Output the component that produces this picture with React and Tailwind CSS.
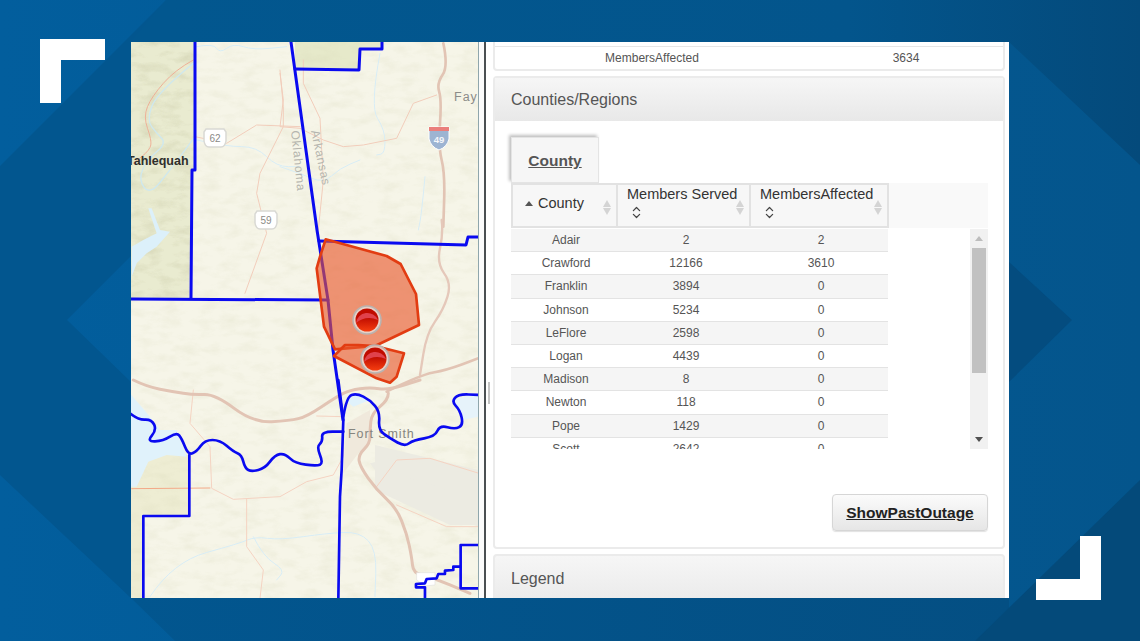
import React from 'react';
import { ChevronsUpDown } from 'lucide-react';

const rows = [
    ['Adair', '2', '2'],
    ['Crawford', '12166', '3610'],
    ['Franklin', '3894', '0'],
    ['Johnson', '5234', '0'],
    ['LeFlore', '2598', '0'],
    ['Logan', '4439', '0'],
    ['Madison', '8', '0'],
    ['Newton', '118', '0'],
    ['Pope', '1429', '0'],
    ['Scott', '2642', '0'],
];

// paths are traced in the coordinates of a 3x crop, so each group scales back down
const Crop = ({ x, y, children }) => <g transform={`translate(${x} ${y}) scale(0.3333)`}>{children}</g>;

const Line = ({ d, color = '#0a0af0', w = 9 }) => (
    <polyline points={d} fill="none" stroke={color} strokeWidth={w} strokeLinejoin="round" strokeLinecap="round" />
);

// same trace, but rounded through the midpoints of its segments
const Curve = ({ d, color = '#0a0af0', w = 8 }) => {
    const pts = d.split(' ').map(p => p.split(',').map(Number));
    let path = `M${pts[0][0]} ${pts[0][1]}`;
    for (let i = 1; i < pts.length - 1; i++) {
        const mx = (pts[i][0] + pts[i + 1][0]) / 2;
        const my = (pts[i][1] + pts[i + 1][1]) / 2;
        path += ` Q${pts[i][0]} ${pts[i][1]} ${mx} ${my}`;
    }
    const last = pts[pts.length - 1];
    path += ` L${last[0]} ${last[1]}`;
    return <path d={path} fill="none" stroke={color} strokeWidth={w} strokeLinecap="round" strokeLinejoin="round" />;
};

const Marker = ({ cx, cy }) => (
    <g>
        <circle cx={cx} cy={cy} r="14" fill="#e8e4e2" fillOpacity="0.75" stroke="#b9b3b0" strokeWidth="1.5" />
        <circle cx={cx} cy={cy} r="11.5" fill="url(#markerRed)" />
        <path d={`M${cx - 11} ${cy + 3} Q${cx - 1} ${cy - 5} ${cx + 11} ${cy} A11.5 11.5 0 0 0 ${cx - 11} ${cy + 3} Z`} fill="#e0424c" />
    </g>
);

const Shield = ({ x, y, label }) => (
    <g>
        <path d={`M${x - 9} ${y - 9} h18 l2 3 v9 q-1 6 -5 6 h-12 q-4 0 -5 -6 v-9 z`} fill="#fff" stroke="#d9d9d4" strokeWidth="1.5" />
        <text x={x} y={y + 4} textAnchor="middle" fontSize="10" fill="#8a8a86">{label}</text>
    </g>
);

const MapPane = () => (
    <div className="w-[347px] h-full shrink-0 bg-[#f5f4e7] font-['Liberation_Sans',sans-serif]">
        <svg viewBox="131 42 347 556" className="w-full h-full block">
            <defs>
                <filter id="hills" x="0" y="0" width="100%" height="100%">
                    <feTurbulence type="fractalNoise" baseFrequency="0.05 0.11" numOctaves="4" seed="8" />
                    <feColorMatrix values="0 0 0 0 0.66  0 0 0 0 0.66  0 0 0 0 0.46  1.6 0 0 0 -0.68" />
                </filter>
                <linearGradient id="markerRed" x1="0" y1="0" x2="0" y2="1">
                    <stop offset="0.4" stopColor="#c00c00" />
                    <stop offset="1" stopColor="#f63e10" />
                </linearGradient>
                <clipPath id="greenSide">
                    <polygon points="131,42 195,42 195,170 192,170 192,298 131,298" />
                </clipPath>
            </defs>

            {/* terrain */}
            <rect x="131" y="42" width="347" height="556" fill="#f6f5e8" />
            <polygon points="131,42 195,42 195,170 192,170 192,298 131,298" fill="#e9ebd0" />
            <polygon points="295,42 382,42 382,49 360,49 359,70 295,69" fill="#e6e9ca" />
            <Crop x={130} y={380}>
                <polygon points="0,230 60,210 175,225 178,408 40,408 40,660 0,660" fill="#eeedd3" />
            </Crop>
            <rect x="131" y="42" width="347" height="556" filter="url(#hills)" opacity="0.3" />
            <rect x="131" y="42" width="70" height="260" filter="url(#hills)" clipPath="url(#greenSide)" opacity="0.7" />
            <polygon points="375,445 478,470 478,525 450,525 375,490" fill="#ecebe2" />

            {/* water */}
            <Crop x={130} y={380}>
                <polygon points="0,40 60,110 90,150 140,150 170,230 110,225 55,245 20,320 0,320" fill="#e0f2fb" />
                <polygon points="645,60 680,45 720,60 670,80" fill="#e0f2fb" />
                <polygon points="965,60 1047,40 1047,110 1000,120" fill="#e6f3fa" />
                <Curve d="60,650 130,545 330,490 375,470 450,480 590,460 690,455 740,510 735,650" color="#d8edf6" w={3} />
                <Curve d="370,470 400,530 465,570 440,600" color="#d8edf6" w={3} />
            </Crop>
            <Crop x={0} y={0}>
                <polygon points="395,740 430,720 470,700 445,625 455,625 480,690 510,695 470,740 440,760 410,790 395,830" fill="#dcf0fa" />
                <Curve d="580,190 470,280 440,360 470,400 500,430 440,480 415,540 450,585 510,510 585,410" color="#cfe8ee" w={4} />
                <Curve d="590,140 640,130 660,160 700,130 760,150 860,140" color="#d8edf6" w={3} />
                <Curve d="590,420 680,440 770,440 830,500 900,500" color="#d8edf6" w={3} />
            </Crop>
            <Crop x={280} y={40}>
                <Curve d="300,40 270,200 315,270 315,340 290,345" color="#d8edf6" w={3} />
                <Curve d="0,380 60,400 130,430 180,385 240,360" color="#d8edf6" w={3} />
                <Curve d="435,410 425,520 415,570" color="#d8edf6" w={3} />
            </Crop>

            {/* minor roads */}
            <Crop x={0} y={0}>
                <Curve d="580,180 525,210 455,290 430,350 455,420 450,450 400,490" color="#eeb097" w={3} />
                <Line d="585,410 680,430 770,375 900,380" color="#f2cdbb" w={3} />
                <Line d="840,210 850,320 850,380 780,520 770,580 800,700 735,880" color="#f2cdbb" w={3} />
            </Crop>
            <Crop x={280} y={40}>
                <Line d="0,100 10,180 0,260 60,265 130,300 190,320 250,315 350,295 400,190 470,165" color="#f2cdbb" w={3} />
                <Line d="70,60 70,130 120,235 130,420 115,570" color="#f2cdbb" w={3} />
            </Crop>
            <Crop x={130} y={380}>
                <Line d="190,30 180,130 240,200 245,325 310,358 450,350 530,305 610,285 640,230 640,110 560,108" color="#f5d3c2" w={3} />
                <Line d="5,326 240,324" color="#f3a988" w={3} />
                <Line d="350,358 350,500 400,570 390,655" color="#f5d3c2" w={3} />
                <polygon points="650,130 720,90 720,190 685,220 640,280" fill="#f0e9dc" />
                <polygon points="720,250 800,230 1047,290 1047,440 950,410 950,330 830,290 750,290" fill="#ecebe2" />
                <Line d="740,320 800,240 900,235 1047,280" color="#f5d3c2" w={3} />
                <Line d="800,375 950,440 1047,440" color="#f5d3c2" w={3} />
            </Crop>

            {/* highways */}
            <Crop x={280} y={40}>
                <Curve d="490,10 505,80 470,130 485,180 475,320 495,400 490,560" color="#e2c4b4" w={8} />
            </Crop>
            <Crop x={280} y={220}>
                <Curve d="485,0 490,40 470,130 515,190 490,270 440,340 420,465" color="#e5c8ba" w={7} />
                <Curve d="320,515 420,465 500,450 595,415" color="#e2c4b4" w={8} />
            </Crop>
            <Crop x={130} y={380}>
                <Curve d="10,0 50,20 130,35 190,45 255,42 370,128 480,122 530,110 620,50 660,30 720,22 775,30 870,0" color="#e2c4b4" w={9} />
                <Curve d="775,40 775,60 725,100 720,150 720,190 685,225 690,260 740,330 800,385 830,460 845,530 850,580 900,590 1020,640" color="#e2c4b4" w={9} />
                <polygon points="860,578 915,578 915,615 885,618 860,600" fill="#fff" stroke="#e2e2de" strokeWidth="2" />
            </Crop>

            {/* labels */}
            <text x="127" y="165" fontSize="12.5" fontWeight="700" fill="#2f2f2b">Tahlequah</text>
            <text x="454" y="101" fontSize="12.5" fill="#8b8b88" letterSpacing="1">Fay</text>
            <text x="348" y="438" fontSize="12.5" fill="#85857f" letterSpacing="0.9">Fort Smith</text>
            <text transform="translate(291 131) rotate(84)" fontSize="12" fill="#b5b5ae" letterSpacing="0.8">Oklahoma</text>
            <text transform="translate(311 131) rotate(78)" fontSize="12" fill="#b5b5ae" letterSpacing="0.8">Arkansas</text>
            <Shield x={215} y={138} label="62" />
            <Shield x={266} y={220} label="59" />
            <g>
                <path d="M429 127 h20 v12 q-2 8 -10 11 q-8 -3 -10 -11 z" fill="#9db4d2" stroke="#fff" strokeWidth="1" />
                <rect x="429" y="127" width="20" height="4" fill="#ea7f7c" />
                <text x="439" y="143" textAnchor="middle" fontSize="9.5" fontWeight="700" fill="#f4f6fa">49</text>
            </g>

            {/* county lines */}
            <Line d="195,42 195,170 192,170 191,298" w={3} />
            <Line d="131,299 328,300" w={3} />
            <Line d="291,42 317,230 328,300 333,350 343,420" w={3} />
            <Line d="295,69 359,70 360,49 382,49 382,42" w={3} />
            <Line d="319,241 466,245 468,237 478,237" w={3} />
            <Crop x={130} y={380}>
                <Line d="625,0 640,120 635,270 630,350 625,660" w={8} />
                <Curve d="0,100 25,120 65,118 80,150 50,185 100,183 140,157 155,175 175,225 200,215 225,180 270,180 310,215 335,225 345,265 365,275 405,265 435,225 465,220 495,250 560,258 580,250 560,200 578,185 575,155 640,155" />
                <Curve d="640,110 650,50 680,40 720,60 750,95 745,150 780,175 825,200 850,180 915,170 930,135 975,148 1000,135 990,90 965,65 985,42 1047,45" />
                <Line d="178,225 178,408 40,408 40,660" w={8} />
                <Line d="1047,495 992,495 992,625 1047,625" w={8} />
                <Line d="990,560 970,560 970,570 945,572 945,582 925,582 920,595 890,597 885,610 858,612 858,622 885,622 885,660" w={8} />
            </Crop>

            {/* outage areas */}
            <Crop x={280} y={220}>
                <polygon points="137,58 320,108 362,132 408,222 417,315 285,378 165,388 132,320 110,145 120,110" fill="#e8562a" fillOpacity="0.62" stroke="#e23c12" strokeWidth="8" strokeLinejoin="round" />
                <polygon points="162,408 195,375 235,375 285,378 372,400 350,470 330,488 290,475" fill="#e8562a" fillOpacity="0.62" stroke="#e23c12" strokeWidth="8" strokeLinejoin="round" />
            </Crop>
            <Marker cx={367} cy={320} />
            <Marker cx={375} cy={359} />
        </svg>
    </div>
);

const Splitter = () => (
    <div className="w-[15px] h-full shrink-0 bg-white flex">
        <div className="w-[1px] bg-[#8fa6ac]" />
        <div className="w-[5px] bg-[#fbfbfb]" />
        <div className="w-[2px] bg-[#4a4f52]" />
        <div className="flex-1 flex items-center justify-center">
            <div className="w-[2px] h-[22px] mt-[146px] ml-[-2px] bg-[#c4c4c4]" />
        </div>
    </div>
);

const SortArrows = () => (
    <div className="absolute right-[5px] top-[15px] flex flex-col gap-[1px]">
        <div className="w-0 h-0 border-x-[4px] border-x-transparent border-b-[7px] border-b-[#d4d4d4]" />
        <div className="w-0 h-0 border-x-[4px] border-x-transparent border-t-[7px] border-t-[#d4d4d4]" />
    </div>
);

const HeadCell = ({ label, className }) => (
    <div className={`relative border-r-2 border-[#e2e2e2] pl-[9px] text-[14.5px] leading-[18px] text-[#333] ${className}`}>
        <div>{label}</div>
        <ChevronsUpDown size={15} strokeWidth={2} className="mt-[2px] ml-[2px] text-[#444]" />
        <SortArrows />
    </div>
);

const CountyTable = () => (
    <div className="w-[477px]">
        <div className="h-[45px] bg-[#f9f9f9] flex">
            <div className="w-[378px] flex bg-[#f7f7f7] border-t-2 border-l-2 border-b-2 border-[#e2e2e2]">
                <div className="relative w-[105px] border-r-2 border-[#e2e2e2] flex items-center pl-[12px] pb-[4px] text-[14.5px] text-[#333]">
                    <div className="w-0 h-0 mr-[5px] border-x-[4px] border-x-transparent border-b-[5px] border-b-[#555]" />
                    County
                    <SortArrows />
                </div>
                <HeadCell label="Members Served" className="w-[133px]" />
                <HeadCell label="MembersAffected" className="flex-1" />
            </div>
        </div>
        <div className="h-[221px] pt-[1px] flex justify-between">
            <div className="w-[377px] overflow-hidden text-[12px] text-[#555]">
                {rows.map((row, i) => (
                    <div key={row[0]} className={`h-[23.2px] shrink-0 flex items-center border-b border-[#e3e3e3] ${i % 2 === 0 ? 'bg-[#f5f5f5]' : 'bg-white'}`}>
                        <div className="w-[110px] text-center">{row[0]}</div>
                        <div className="w-[130px] text-center">{row[1]}</div>
                        <div className="w-[137px] pl-[3px] text-center">{row[2]}</div>
                    </div>
                ))}
            </div>
            <div className="w-[18px] h-full bg-[#f1f1f1] flex flex-col items-center">
                <div className="h-[19px] flex items-center justify-center">
                    <div className="w-0 h-0 border-x-[4px] border-x-transparent border-b-[5px] border-b-[#bdbdbd]" />
                </div>
                <div className="w-[14px] h-[125px] bg-[#c1c1c1]" />
                <div className="flex-1 flex items-end pb-[7px]">
                    <div className="w-0 h-0 border-x-[4px] border-x-transparent border-t-[5px] border-t-[#505050]" />
                </div>
            </div>
        </div>
    </div>
);

const RightPane = () => (
    <div className="flex-1 h-full overflow-hidden bg-white pr-[4px] font-['Liberation_Sans',sans-serif]">
        <div className="h-[29px] pt-[4px] border-x-2 border-b-2 border-[#ebebeb] rounded-b-[4px]">
            <div className="h-[23px] border-t border-[#e6e6e6] flex items-center text-[12px] text-[#555]">
                <div className="w-[314px] text-center">MembersAffected</div>
                <div className="w-[194px] text-center">3634</div>
            </div>
        </div>

        <div className="mt-[5px] h-[473px] border-2 border-[#ebebeb] rounded-[4px] flex flex-col">
            <div className="h-[43px] shrink-0 bg-gradient-to-b from-[#f6f6f6] to-[#e8e8e8] pl-[16px] flex items-center text-[16px] text-[#555]">
                Counties/Regions
            </div>
            <div className="flex-1 pl-[16px] pt-[16px]">
                <div className="w-[88px] h-[46px] pt-[2px] bg-[#f6f6f6] border border-[#e4e4e4] shadow-[-2px_-2px_3px_rgba(0,0,0,0.25)] flex items-center justify-center text-[15.5px] font-bold underline text-[#555]">
                    County
                </div>
                <CountyTable />
                <div className="w-[477px] mt-[45px] flex justify-end">
                    <button className="w-[156px] h-[37px] rounded-[4px] border border-[#d6d6d6] bg-gradient-to-b from-[#fbfbfb] to-[#e6e6e6] shadow-[0_1px_1px_rgba(0,0,0,0.12)] text-[15.5px] font-bold underline text-[#222]">
                        ShowPastOutage
                    </button>
                </div>
            </div>
        </div>

        <div className="mt-[5px] h-[60px] border-2 border-[#ebebeb] rounded-[4px] bg-gradient-to-b from-[#f6f6f6] to-[#e8e8e8] pl-[16px] pt-[11px] text-[16px] text-[#555]">
            Legend
        </div>
    </div>
);

const Background = () => (
    <svg viewBox="0 0 1140 641" className="absolute inset-0 w-full h-full">
        <defs>
            <linearGradient id="bgBase" x1="0" y1="0" x2="1" y2="0">
                <stop offset="0" stopColor="#025e9d" />
                <stop offset="1" stopColor="#04558c" />
            </linearGradient>
            <linearGradient id="bgTop" gradientUnits="userSpaceOnUse" x1="166" y1="0" x2="1140" y2="0">
                <stop offset="0" stopColor="#02578f" />
                <stop offset="0.7" stopColor="#03558c" />
                <stop offset="1" stopColor="#044a7b" />
            </linearGradient>
            <linearGradient id="bgBottom" gradientUnits="userSpaceOnUse" x1="131" y1="0" x2="1009" y2="0">
                <stop offset="0" stopColor="#02568f" />
                <stop offset="1" stopColor="#044f83" />
            </linearGradient>
        </defs>
        <rect width="1140" height="641" fill="url(#bgBase)" />
        <polygon points="0,166 166,0 166,42 131,42 131,256 67,320 131,382 131,598 0,475" fill="#02568f" />
        <polygon points="166,0 1140,0 1140,165 1009,42 131,42" fill="url(#bgTop)" />
        <polygon points="131,598 1009,598 1009,641 175,641" fill="url(#bgBottom)" />
        <polygon points="1009,262 1072,320 1009,382" fill="#044c7f" />
        <polygon points="1140,480 975,641 1140,641" fill="#044a7a" />
    </svg>
);

const App = () => (
    <div className="relative w-[1140px] h-[641px] overflow-hidden pl-[131px] pt-[42px]">
        <Background />
        <div className="relative w-[878px] h-[556px] flex">
            <MapPane />
            <Splitter />
            <RightPane />
        </div>
        <div className="absolute left-[40px] top-[39px] w-[65px] h-[64px] border-l-[21px] border-t-[21px] border-white" />
        <div className="absolute left-[1036px] top-[536px] w-[65px] h-[64px] border-r-[21px] border-b-[21px] border-white" />
    </div>
);

export default App;
